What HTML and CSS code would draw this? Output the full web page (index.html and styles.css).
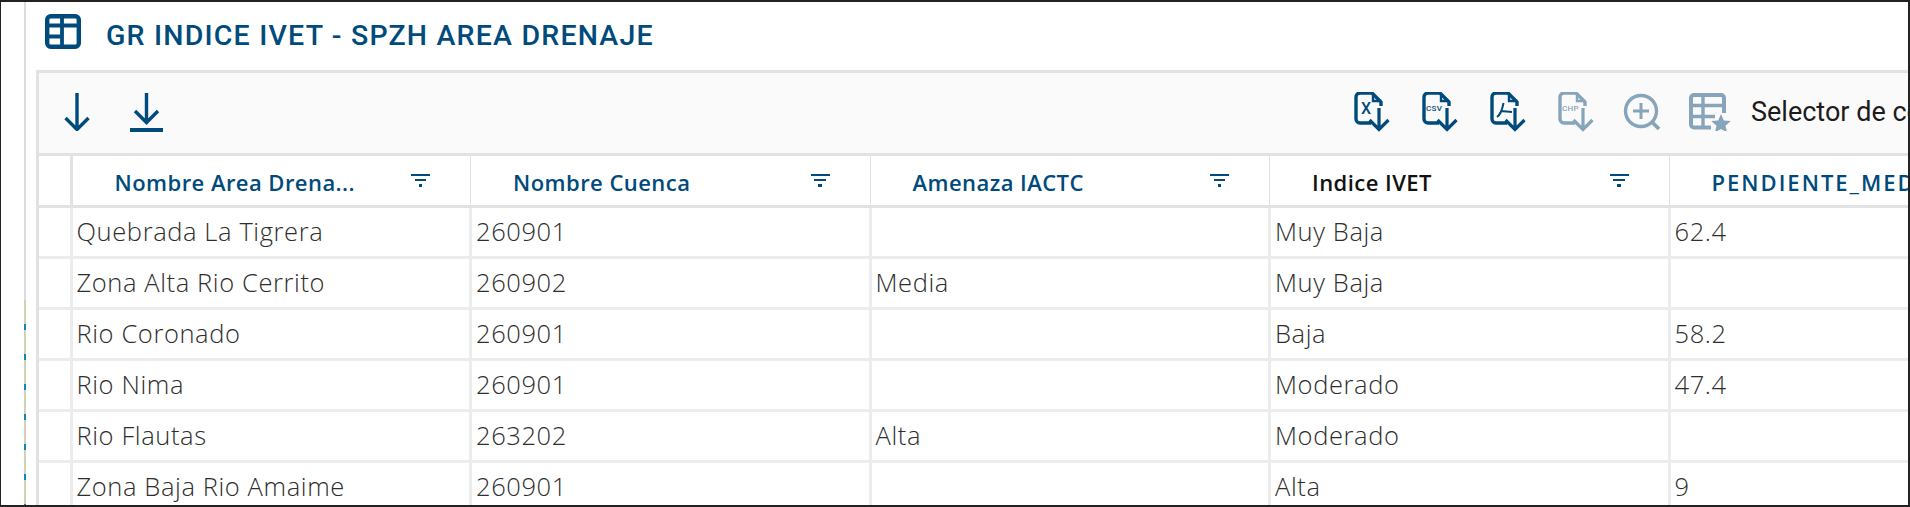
FILE: index.html
```html
<!DOCTYPE html>
<html lang="es">
<head>
<meta charset="utf-8">
<title>GR INDICE IVET - SPZH AREA DRENAJE</title>
<link rel="stylesheet" href="styles.css">
</head>
<body>
<svg class="defs" width="0" height="0" aria-hidden="true">
  <symbol id="doc" viewBox="0 0 36 40">
    <path d="M17 31H6a4 4 0 0 1-4-4V5a4 4 0 0 1 4-4h12l9 9v4" fill="none" stroke="currentColor" stroke-width="3.400" stroke-linejoin="round"/>
    <path d="M19 3v6h6" fill="none" stroke="currentColor" stroke-width="2.400"/>
    <path d="M25 16v21M15.500 28l9.500 9.500 9.500-9.500" fill="none" stroke="currentColor" stroke-width="3.200"/>
  </symbol>
</svg>
<div class="screen">
  <div class="rail"></div>
  <main class="main">
    <header class="title-row">
      <svg class="title-icon" viewBox="0 0 36 35">
        <rect x="2.200" y="2.200" width="31.600" height="30.600" rx="3.500" fill="none" stroke="currentColor" stroke-width="4.400"/>
        <path d="M2 11.500h32M2 22.500h15M17 2v31" fill="none" stroke="currentColor" stroke-width="3.800"/>
      </svg>
      <h1 class="title">GR INDICE IVET - SPZH AREA DRENAJE</h1>
    </header>
    <section class="panel">
      <div class="toolbar">
        <div class="tool-left">
          <svg class="arrow" viewBox="0 0 26 38"><path d="M13 0v36M1.500 25 13 36.500 24.500 25" fill="none" stroke="currentColor" stroke-width="3.400"/></svg>
          <svg class="arrow-bar" viewBox="0 0 33 39"><path d="M16.500 0v29M5 18l11.500 11.500L28 18" fill="none" stroke="currentColor" stroke-width="3.400"/><path d="M0 37h33" stroke="currentColor" stroke-width="4"/></svg>
        </div>
        <div class="tool-docs">
          <span class="doc"><svg class="doc-svg"><use href="#doc"/></svg><span class="doc-x">X</span></span>
          <span class="doc"><svg class="doc-svg"><use href="#doc"/></svg><span class="doc-label">CSV</span></span>
          <span class="doc"><svg class="doc-svg"><use href="#doc"/></svg><svg class="doc-pdf" viewBox="0 0 18 16"><path d="M1 15c3-2 5-6 6.500-14M5 9l11 1" fill="none" stroke="currentColor" stroke-width="2"/></svg></span>
          <span class="doc faded"><svg class="doc-svg"><use href="#doc"/></svg><span class="doc-label">CHP</span></span>
        </div>
        <div class="tool-extra faded">
          <svg class="zoom-icon" viewBox="0 0 38 38"><circle cx="18" cy="18" r="15.500" fill="none" stroke="currentColor" stroke-width="3.400"/><path d="M18 10v16M10 18h16" fill="none" stroke="currentColor" stroke-width="3"/><path d="M29 29l7 7" stroke="currentColor" stroke-width="3.800"/></svg>
          <svg class="star-icon" viewBox="0 0 44 38">
            <path d="M22 34.500H5a3 3 0 0 1-3-3V5a3 3 0 0 1 3-3h27a3 3 0 0 1 3 3v15" fill="none" stroke="currentColor" stroke-width="4"/>
            <path d="M2 12.500h33M2 23.500h24M14 2v33" fill="none" stroke="currentColor" stroke-width="3.400"/>
            <path d="M32 21l2.800 6.500 7 .6-5.300 4.600 1.600 6.800-6.100-3.600-6.100 3.600 1.600-6.800-5.300-4.600 7-.6z" fill="currentColor"/>
          </svg>
        </div>
        <span class="selector">Selector de columnas</span>
      </div>
      <table class="grid">
        <colgroup><col class="c-gutter"><col class="c-data"><col class="c-data"><col class="c-data"><col class="c-data"><col class="c-data"></colgroup>
        <thead>
          <tr>
            <th></th>
            <th><div class="th"><span class="th-label">Nombre Area Drena...</span><span class="filter"><i></i><i></i><i></i></span></div></th>
            <th><div class="th"><span class="th-label">Nombre Cuenca</span><span class="filter"><i></i><i></i><i></i></span></div></th>
            <th><div class="th"><span class="th-label">Amenaza IACTC</span><span class="filter"><i></i><i></i><i></i></span></div></th>
            <th><div class="th"><span class="th-label active">Indice IVET</span><span class="filter"><i></i><i></i><i></i></span></div></th>
            <th><div class="th"><span class="th-label wide">PENDIENTE_MEDIA</span></div></th>
          </tr>
        </thead>
        <tbody>
          <tr><td></td><td>Quebrada La Tigrera</td><td>260901</td><td></td><td>Muy Baja</td><td>62.4</td></tr>
          <tr><td></td><td>Zona Alta Rio Cerrito</td><td>260902</td><td>Media</td><td>Muy Baja</td><td></td></tr>
          <tr><td></td><td>Rio Coronado</td><td>260901</td><td></td><td>Baja</td><td>58.2</td></tr>
          <tr><td></td><td>Rio Nima</td><td>260901</td><td></td><td>Moderado</td><td>47.4</td></tr>
          <tr><td></td><td>Rio Flautas</td><td>263202</td><td>Alta</td><td>Moderado</td><td></td></tr>
          <tr><td></td><td>Zona Baja Rio Amaime</td><td>260901</td><td></td><td>Alta</td><td>9</td></tr>
        </tbody>
      </table>
    </section>
  </main>
</div>
</body>
</html>
```
FILE: styles.css
```css
* { box-sizing: border-box; }
html, body { margin: 0; height: 100%; background: #fff; overflow: hidden; }
.defs { position: absolute; }
.screen {
  width: 1910px; height: 507px;
  border: 2px solid #222; border-width: 2px 2px 2px 1px;
  display: flex; overflow: hidden; background: #fff;
}
.rail {
  flex: 0 0 25px; border-right: 2px solid #dcdcdc;
  position: relative;
}
.rail::after {
  content: ""; position: absolute; right: -2px; bottom: 0; width: 2px; height: 205px;
  background: repeating-linear-gradient(to bottom, #d3d1b4 0 24px, #1385b5 24px 30px);
}
.main { flex: 1; min-width: 0; padding-left: 10px; color: #004a7c; }
.title-row { height: 68px; display: flex; align-items: flex-start; padding: 12px 0 0 9px; gap: 25px; }
.title-icon { width: 36px; height: 35px; flex: none; }
.title { margin: 0; font: 500 28.500px/44px Roboto, sans-serif; letter-spacing: 1.200px; white-space: nowrap; }
.panel { width: 2000px; border-left: 3px solid #e2e2e2; border-top: 3px solid #e2e2e2; }
.toolbar { height: 83px; background: #fafafa; display: flex; align-items: center; padding: 0 0 2px 25px; border-bottom: 3px solid #e2e2e2; white-space: nowrap; }
.tool-left { display: flex; gap: 40px; flex: none; }
.arrow { width: 26px; height: 38px; }
.arrow-bar { width: 33px; height: 39px; }
.tool-docs { display: flex; gap: 32px; margin-left: 1191px; flex: none; }
.doc { position: relative; width: 36px; height: 40px; display: block; }
.doc-svg { width: 36px; height: 40px; display: block; }
.doc-x { position: absolute; left: 7px; top: 7px; font: 500 16px/20px Roboto, sans-serif; }
.doc-label { position: absolute; left: 4px; top: 12px; font: 500 8px/10px Roboto, sans-serif; letter-spacing: .3px; }
.doc-pdf { position: absolute; left: 6px; top: 10px; width: 18px; height: 16px; }
.faded { color: #86a4ba; }
.tool-extra { display: flex; gap: 28px; margin-left: 29px; flex: none; }
.zoom-icon { width: 38px; height: 38px; }
.star-icon { width: 44px; height: 38px; }
.selector { margin-left: 18px; font: 400 27px/30px Roboto, sans-serif; color: #1c1c1c; }
.grid { table-layout: fixed; border-collapse: collapse; width: 2030px; }
.c-gutter { width: 32px; }
.c-data { width: 399.500px; }
.grid th { height: 50px; padding: 0; border-bottom: 3px solid #e2e2e2; border-right: 1px solid #e2e2e2; text-align: left; }
.grid th:first-child { border-right: 3px solid #e2e2e2; }
.th { display: flex; align-items: center; justify-content: space-between; padding: 3px 40px 0 42px; }
.th-label { font: 600 22px/26px "Open Sans", sans-serif; letter-spacing: .45px; color: #004a7c; white-space: nowrap; }
.th-label.active { color: #111; }
.th-label.wide { letter-spacing: 2px; }
.filter { display: flex; flex-direction: column; align-items: center; gap: 3px; width: 19px; margin-top: -3px; }
.filter i { display: block; height: 2px; background: #004a7c; width: 100%; }
.filter i:nth-child(2) { width: 60%; }
.filter i:nth-child(3) { width: 20%; height: 3px; }
.grid td { height: 51px; padding: 0 0 1px 4px; border-bottom: 3px solid #ececec; border-right: 3px solid #ececec; font: 300 25.500px/28px "Open Sans", sans-serif; letter-spacing: .6px; color: #2e2e2e; white-space: nowrap; overflow: hidden; }
```
